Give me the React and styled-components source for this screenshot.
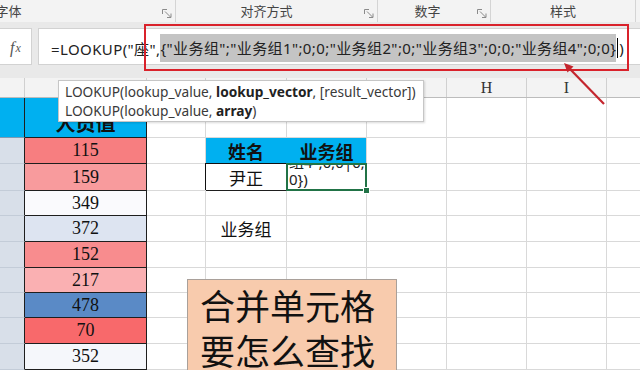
import React from 'react';
import styled, { createGlobalStyle, css } from 'styled-components';

const Global = createGlobalStyle`
  html, body { margin: 0; padding: 0; background: #fff; }
  body { width: 640px; height: 370px; overflow: hidden; font-family: "Noto Sans", "Noto Sans CJK SC", sans-serif; }
`;

const Screen = styled.div`
  position: relative;
  width: 640px;
  height: 370px;
  overflow: hidden;
  background: #fff;
  display: flex;
  flex-direction: column;
`;

/* ---------- ribbon group labels ---------- */
const RibbonLabels = styled.div`
  flex: none;
  height: 22px;
  display: flex;
  background: #f3f3f3;
`;

const Group = styled.div`
  flex: none;
  box-sizing: border-box;
  width: ${p => p.$w}px;
  margin-left: ${p => p.$ml || 0}px;
  display: flex;
  align-items: center;
  border-right: 1px solid #d4d4d4;
`;

const GroupLabel = styled.div`
  flex: 1;
  text-align: center;
  padding-left: ${p => p.$pl || 0}px;
  padding-right: ${p => p.$pr || 0}px;
  font-family: "Noto Sans CJK SC", sans-serif;
  font-size: 13px;
  color: #444;
  line-height: 22px;
`;

const LauncherSvg = styled.svg`
  flex: none;
  width: 10px;
  height: 9px;
  margin: 5px 3px 0 0;
`;

const Launcher = () => (
  <LauncherSvg viewBox="0 0 10 9">
    <path d="M0.5 5V0.5H5" fill="none" stroke="#8a8a8a" strokeWidth="1" />
    <path d="M3 2.5L8.5 8" fill="none" stroke="#8a8a8a" strokeWidth="1" />
    <path d="M9 4.5V8.5H5" fill="none" stroke="#8a8a8a" strokeWidth="1" />
  </LauncherSvg>
);

/* ---------- formula bar ---------- */
const FormulaArea = styled.div`
  flex: none;
  height: 56px;
  box-sizing: border-box;
  padding-top: 6px;
  background: #e9e9e9;
  display: flex;
  align-items: flex-start;
  gap: 6px;
`;

const FxBox = styled.div`
  flex: none;
  box-sizing: border-box;
  width: 32px;
  height: 37px;
  background: #fff;
  border: 1px solid #d2d2d2;
  border-left: none;
  display: flex;
  align-items: center;
  justify-content: center;
  padding-top: 3px;
  font-family: "Liberation Serif", serif;
  font-style: italic;
  color: #555;
`;

const FxF = styled.span`
  font-size: 16px;
`;
const FxX = styled.span`
  font-size: 12px;
  margin-left: 1px;
`;

const FormulaInput = styled.div`
  flex: 1;
  box-sizing: border-box;
  height: 37px;
  background: #fff;
  border: 1px solid #d2d2d2;
  border-right: none;
  padding: 3px 0 0 12px;
  display: flex;
  align-items: center;
  white-space: nowrap;
  font-family: "Noto Sans", "Noto Sans CJK SC", sans-serif;
  font-size: 15px;
  letter-spacing: 0.4px;
  color: #222;
`;

const Selected = styled.span`
  background: #c4c4c4;
  line-height: 28px;
  display: inline-block;
`;

const Caret = styled.span`
  display: inline-block;
  width: 1px;
  height: 20px;
  background: #000;
  margin: 0 1px;
`;

/* ---------- column header ---------- */
const COLS = [25, 122, 59, 81, 80, 80, 80, 80, 80];
const ROWS = [40, 26, 27, 25, 26, 26, 25, 25, 26, 26];
const colTemplate = COLS.map(w => `${w}px`).join(' ');

const ColHeader = styled.div`
  flex: none;
  display: grid;
  grid-template-columns: ${colTemplate};
  height: 19px;
  background: #f3f3f3;
  border-bottom: 1px solid #bcbcbc;
`;

const ColLabel = styled.div`
  box-sizing: border-box;
  border-right: 1px solid #d0d0d0;
  text-align: center;
  font-family: "Liberation Serif", serif;
  font-size: 16px;
  line-height: 19px;
  color: #333;
`;

/* ---------- sheet ---------- */
const Sheet = styled.div`
  flex: none;
  display: grid;
  grid-template-columns: ${colTemplate};
  grid-template-rows: ${ROWS.map(h => `${h}px`).join(' ')};
`;

const Cell = styled.div`
  box-sizing: border-box;
  min-width: 0;
  background: ${p => p.$bg || '#fff'};
  border-right: 1px solid ${p => p.$br || '#d9d9d9'};
  border-bottom: 1px solid ${p => p.$bb || '#d9d9d9'};
  display: flex;
  align-items: ${p => p.$valign || 'center'};
  justify-content: center;
  font-family: ${p => (p.$serif ? '"Liberation Serif", serif' : '"Noto Sans CJK SC", sans-serif')};
  font-size: ${p => p.$fs || 17}px;
  font-weight: ${p => (p.$bold ? 700 : 400)};
  color: #111;
  padding-bottom: ${p => p.$pb || 0}px;
  ${p => p.$boxed && css`box-shadow: -1px -1px 0 #111;`}
  ${p => p.$sel && css`
    position: relative;
    z-index: 2;
    justify-content: flex-start;
    align-items: flex-end;
    overflow: visible;
  `}
`;

const SelFrame = styled.div`
  position: absolute;
  left: -1px;
  top: -1px;
  right: -1px;
  bottom: -1px;
  border: 2px solid #217346;
  pointer-events: none;
`;

const FillHandle = styled.div`
  position: absolute;
  right: -4px;
  bottom: -4px;
  width: 5px;
  height: 5px;
  background: #217346;
  border: 1px solid #fff;
`;

const EditLines = styled.div`
  height: 24px;
  margin-bottom: 2px;
  overflow: hidden;
  display: flex;
  flex-direction: column;
  justify-content: flex-end;
  padding-left: 2px;
  font-family: "Noto Sans", "Noto Sans CJK SC", sans-serif;
  font-size: 15px;
  line-height: 17px;
  color: #222;
`;

/* ---------- overlays ---------- */
const Tooltip = styled.div`
  position: absolute;
  left: 58px;
  top: 80px;
  width: 366px;
  height: 42px;
  box-sizing: border-box;
  background: #fff;
  border: 1px solid #c6c6c6;
  box-shadow: 1px 1px 2px rgba(0, 0, 0, 0.15);
  padding: 1px 0 0 6px;
  font-family: "Noto Sans", sans-serif;
  font-size: 13.7px;
  line-height: 19px;
  color: #3a3a3a;
  white-space: nowrap;
`;

const Bold = styled.b`
  font-weight: 700;
  color: #222;
`;

const RedFrame = styled.div`
  position: absolute;
  left: 144px;
  top: 24px;
  width: 485px;
  height: 47px;
  box-sizing: border-box;
  border: 2px solid #d9222b;
  pointer-events: none;
`;

const ArrowSvg = styled.svg`
  position: absolute;
  left: 555px;
  top: 55px;
  width: 60px;
  height: 55px;
  overflow: visible;
`;

const TextBox = styled.div`
  position: absolute;
  left: 187px;
  top: 279px;
  width: 210px;
  height: 110px;
  box-sizing: border-box;
  background: #f8cbad;
  border: 1px solid #a9a09a;
  padding: 2px 0 0 12px;
  font-family: "Noto Sans CJK SC", sans-serif;
  font-size: 35px;
  line-height: 45px;
  color: #111;
  white-space: nowrap;
`;

const BLUE = '#00b0f0';
const DARK = '#1e1e1e';

const values = [
  ['115', '#f77e80'],
  ['159', '#f89b9d'],
  ['349', '#fafafd'],
  ['372', '#dde4f1'],
  ['152', '#f88c8e'],
  ['217', '#fab0b2'],
  ['478', '#5a8ac6'],
  ['70', '#f8696b'],
  ['352', '#f5f7fb'],
];

function cellFor(r, c) {
  if (c === 0) {
    if (r === 0) return <Cell $bg={BLUE} $br={DARK} $bb="#7e9bb3" />;
    return <Cell $bg="#d8dfe9" $br={DARK} $bb="#c3ccd8" />;
  }
  if (c === 1) {
    if (r === 0)
      return (
        <Cell $bg={BLUE} $br={DARK} $bb={DARK} $bold $fs={20} $valign="flex-end" $pb={0}>
          人员值
        </Cell>
      );
    const [v, bg] = values[r - 1];
    return (
      <Cell $bg={bg} $br={DARK} $bb={DARK} $serif $fs={18}>
        {v}
      </Cell>
    );
  }
  if (r === 1 && c === 3)
    return (
      <Cell $bg={BLUE} $br={BLUE} $bb={DARK} $bold $fs={18}>
        姓名
      </Cell>
    );
  if (r === 1 && c === 4)
    return (
      <Cell $bg={BLUE} $br="#d9d9d9" $bb={BLUE} $bold $fs={18}>
        业务组
      </Cell>
    );
  if (r === 2 && c === 3)
    return (
      <Cell $br={DARK} $bb={DARK} $boxed $fs={17}>
        尹正
      </Cell>
    );
  if (r === 2 && c === 4)
    return (
      <Cell $sel>
        <EditLines>
          <span>组4";0;0|0;</span>
          <span>0})</span>
        </EditLines>
        <SelFrame />
        <FillHandle />
      </Cell>
    );
  if (r === 4 && c === 3) return <Cell $fs={17}>业务组</Cell>;
  return <Cell />;
}

const groups = [
  { w: 336, ml: -160, label: '字体', pl: 15, launcher: true },
  { w: 202, label: '对齐方式', pr: 7, launcher: true },
  { w: 113, label: '数字', pr: 0, launcher: true },
  { w: 145, label: '样式' },
];

/* labels of columns under the tooltip are hidden there, so only H and I show */
const colLabels = ['', '', '', '', '', '', 'H', 'I', ''];

export default function App() {
  return (
    <>
      <Global />
      <Screen>
        <RibbonLabels>
          {groups.map((g, i) => (
            <Group key={i} $w={g.w} $ml={g.ml}>
              <GroupLabel $pl={g.pl} $pr={g.pr}>{g.label}</GroupLabel>
              {g.launcher && <Launcher />}
            </Group>
          ))}
        </RibbonLabels>

        <FormulaArea>
          <FxBox>
            <FxF>f</FxF>
            <FxX>x</FxX>
          </FxBox>
          <FormulaInput>
            <span>=LOOKUP("座",</span>
            <Selected>{'{"业务组";"业务组1";0;0;"业务组2";0;"业务组3";0;0;"业务组4";0;0}'}</Selected>
            <Caret />
            <span>)</span>
          </FormulaInput>
        </FormulaArea>

        <ColHeader>
          {colLabels.map((l, i) => (
            <ColLabel key={i}>{l}</ColLabel>
          ))}
        </ColHeader>

        <Sheet>
          {ROWS.map((_, r) =>
            COLS.map((__, c) => <React.Fragment key={`${r}-${c}`}>{cellFor(r, c)}</React.Fragment>)
          )}
        </Sheet>

        <Tooltip>
          <div>
            LOOKUP(lookup_value, <Bold>lookup_vector</Bold>, [result_vector])
          </div>
          <div>
            LOOKUP(lookup_value, <Bold>array</Bold>)
          </div>
        </Tooltip>

        <RedFrame />

        <ArrowSvg viewBox="555 55 60 55">
          <line x1="604" y1="104" x2="569" y2="68" stroke="#c4262e" strokeWidth="2.2" />
          <polygon points="564,63 573.5,66.5 567.5,72.5" fill="#c4262e" />
        </ArrowSvg>

        <TextBox>
          <div>合并单元格</div>
          <div>要怎么查找</div>
        </TextBox>
      </Screen>
    </>
  );
}
